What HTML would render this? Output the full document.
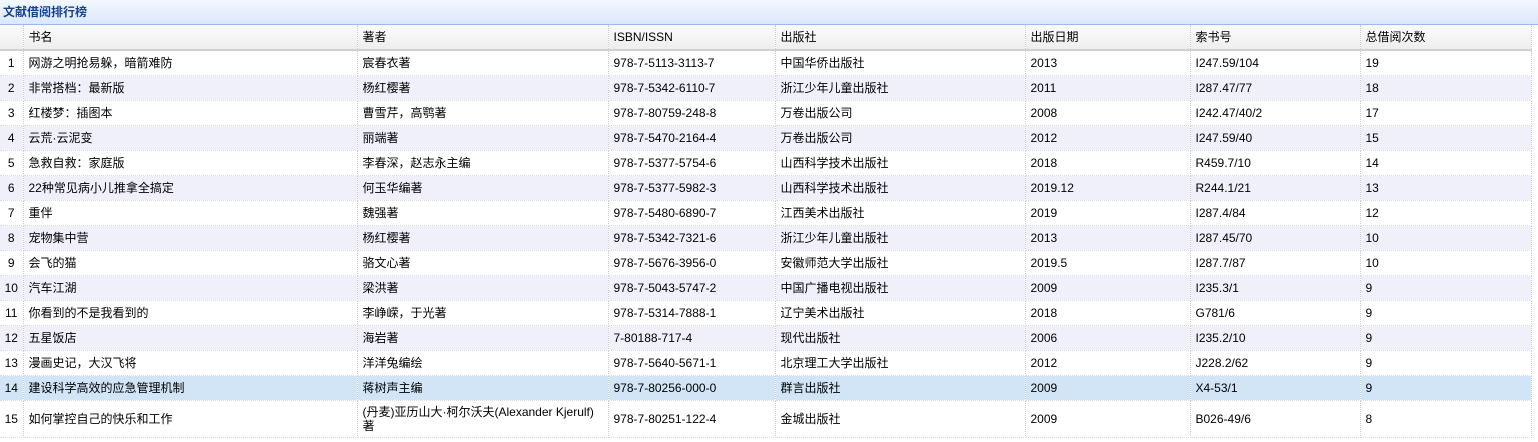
<!DOCTYPE html>
<html><head><meta charset="utf-8"><style>
*{margin:0;padding:0;box-sizing:border-box}
body{width:1538px;height:442px;background:#fff;font-family:"Liberation Sans","Noto Sans CJK SC",sans-serif;font-size:12px;color:#000;overflow:hidden}
.title{height:25px;background:linear-gradient(#f4f8ff,#dbe7fb);border-bottom:1px solid #99bbe8;color:#15428b;font-weight:bold;font-size:12px;line-height:24px;padding-left:3px}
table{border-collapse:collapse;table-layout:fixed;width:1531px}
td{height:25px;padding:0 5px;border-right:1px dotted #ccc;border-bottom:1px dotted #ddd;white-space:nowrap;overflow:hidden;line-height:14px}
tr.h td{background:linear-gradient(#fbfbfb,#eeeeee);border-bottom:2px solid #d0d0d0;height:25px}
tr.a td{background:#f0f0fb}
tr.s td{background:#d1e5f6}
td.n{text-align:center;padding:0;border-right:1px dotted #ccc}
tr.t td{height:37px;white-space:normal}
</style></head><body>
<div class="title">文献借阅排行榜</div>
<table>
<colgroup><col style="width:23px"><col style="width:334px"><col style="width:251px"><col style="width:167px"><col style="width:250px"><col style="width:165px"><col style="width:170px"><col style="width:171px"></colgroup>
<tr class="h"><td class="n"></td><td>书名</td><td>著者</td><td>ISBN/ISSN</td><td>出版社</td><td>出版日期</td><td>索书号</td><td>总借阅次数</td></tr>
<tr><td class="n">1</td><td>网游之明抢易躲，暗箭难防</td><td>宸春衣著</td><td>978-7-5113-3113-7</td><td>中国华侨出版社</td><td>2013</td><td>I247.59/104</td><td>19</td></tr>
<tr class="a"><td class="n">2</td><td>非常搭档：最新版</td><td>杨红樱著</td><td>978-7-5342-6110-7</td><td>浙江少年儿童出版社</td><td>2011</td><td>I287.47/77</td><td>18</td></tr>
<tr><td class="n">3</td><td>红楼梦：插图本</td><td>曹雪芹，高鹗著</td><td>978-7-80759-248-8</td><td>万卷出版公司</td><td>2008</td><td>I242.47/40/2</td><td>17</td></tr>
<tr class="a"><td class="n">4</td><td>云荒·云泥变</td><td>丽端著</td><td>978-7-5470-2164-4</td><td>万卷出版公司</td><td>2012</td><td>I247.59/40</td><td>15</td></tr>
<tr><td class="n">5</td><td>急救自救：家庭版</td><td>李春深，赵志永主编</td><td>978-7-5377-5754-6</td><td>山西科学技术出版社</td><td>2018</td><td>R459.7/10</td><td>14</td></tr>
<tr class="a"><td class="n">6</td><td>22种常见病小儿推拿全搞定</td><td>何玉华编著</td><td>978-7-5377-5982-3</td><td>山西科学技术出版社</td><td>2019.12</td><td>R244.1/21</td><td>13</td></tr>
<tr><td class="n">7</td><td>重伴</td><td>魏强著</td><td>978-7-5480-6890-7</td><td>江西美术出版社</td><td>2019</td><td>I287.4/84</td><td>12</td></tr>
<tr class="a"><td class="n">8</td><td>宠物集中营</td><td>杨红樱著</td><td>978-7-5342-7321-6</td><td>浙江少年儿童出版社</td><td>2013</td><td>I287.45/70</td><td>10</td></tr>
<tr><td class="n">9</td><td>会飞的猫</td><td>骆文心著</td><td>978-7-5676-3956-0</td><td>安徽师范大学出版社</td><td>2019.5</td><td>I287.7/87</td><td>10</td></tr>
<tr class="a"><td class="n">10</td><td>汽车江湖</td><td>梁洪著</td><td>978-7-5043-5747-2</td><td>中国广播电视出版社</td><td>2009</td><td>I235.3/1</td><td>9</td></tr>
<tr><td class="n">11</td><td>你看到的不是我看到的</td><td>李峥嵘，于光著</td><td>978-7-5314-7888-1</td><td>辽宁美术出版社</td><td>2018</td><td>G781/6</td><td>9</td></tr>
<tr class="a"><td class="n">12</td><td>五星饭店</td><td>海岩著</td><td>7-80188-717-4</td><td>现代出版社</td><td>2006</td><td>I235.2/10</td><td>9</td></tr>
<tr><td class="n">13</td><td>漫画史记，大汉飞将</td><td>洋洋兔编绘</td><td>978-7-5640-5671-1</td><td>北京理工大学出版社</td><td>2012</td><td>J228.2/62</td><td>9</td></tr>
<tr class="s"><td class="n">14</td><td>建设科学高效的应急管理机制</td><td>蒋树声主编</td><td>978-7-80256-000-0</td><td>群言出版社</td><td>2009</td><td>X4-53/1</td><td>9</td></tr>
<tr class="t"><td class="n">15</td><td>如何掌控自己的快乐和工作</td><td>(丹麦)亚历山大·柯尔沃夫(Alexander Kjerulf)著</td><td>978-7-80251-122-4</td><td>金城出版社</td><td>2009</td><td>B026-49/6</td><td>8</td></tr>
</table>
</body></html>
